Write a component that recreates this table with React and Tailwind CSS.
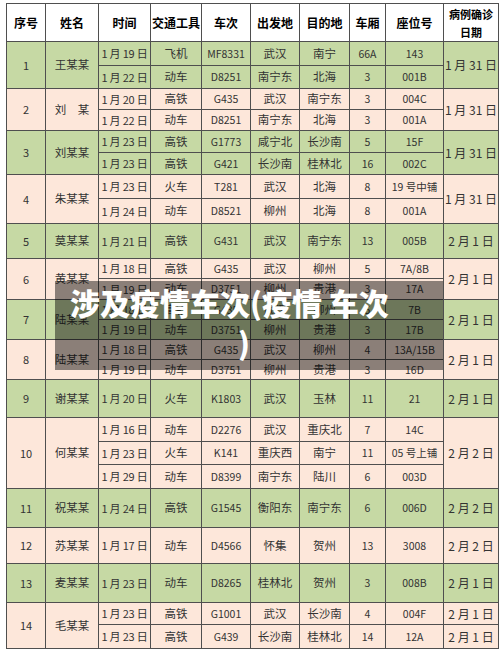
import React from "react";

const groups = [
  { no: "1", name: "王某某", c: "g", date: "1 月 31 日", rows: [
    ["h-[24px]", "1 月 19 日", "飞机", "MF8331", "武汉", "南宁", "66A", "143"],
    ["h-[23px]", "1 月 22 日", "动车", "D8251", "南宁东", "北海", "3", "001B"],
  ]},
  { no: "2", name: "刘\u3000某", c: "p", date: "1 月 31 日", rows: [
    ["h-[21px]", "1 月 20 日", "高铁", "G435", "武汉", "南宁东", "3", "004C"],
    ["h-[21px]", "1 月 22 日", "动车", "D8251", "南宁东", "北海", "3", "001A"],
  ]},
  { no: "3", name: "刘某某", c: "g", date: "1 月 31 日", rows: [
    ["h-[22px]", "1 月 23 日", "高铁", "G1773", "咸宁北", "长沙南", "5", "15F"],
    ["h-[22px]", "1 月 23 日", "高铁", "G421", "长沙南", "桂林北", "16", "002C"],
  ]},
  { no: "4", name: "朱某某", c: "p", date: "1 月 31 日", rows: [
    ["h-[24px]", "1 月 23 日", "火车", "T281", "武汉", "北海", "8", "19 号中铺"],
    ["h-[25px]", "1 月 24 日", "动车", "D8521", "柳州", "北海", "8", "001A"],
  ]},
  { no: "5", name: "莫某某", c: "g", date: "2 月 1 日", rows: [
    ["h-[35px]", "1 月 21 日", "高铁", "G431", "武汉", "南宁东", "13", "005B"],
  ]},
  { no: "6", name: "黄某某", c: "p", date: "2 月 1 日", rows: [
    ["h-[20px]", "1 月 18 日", "高铁", "G435", "武汉", "柳州", "5", "7A/8B"],
    ["h-[21px]", "1 月 19 日", "动车", "D3751", "柳州", "贵港", "3", "17A"],
  ]},
  { no: "7", name: "陆某某", c: "g", date: "2 月 1 日", rows: [
    ["h-[20px]", "1 月 18 日", "高铁", "G435", "武汉", "柳州", "5", "7B"],
    ["h-[20px]", "1 月 19 日", "动车", "D3751", "柳州", "贵港", "3", "17B"],
  ]},
  { no: "8", name: "陆某某", c: "p", date: "2 月 1 日", rows: [
    ["h-[20px]", "1 月 18 日", "高铁", "G435", "武汉", "柳州", "4", "13A/15B"],
    ["h-[20px]", "1 月 19 日", "动车", "D3751", "柳州", "贵港", "3", "16D"],
  ]},
  { no: "9", name: "谢某某", c: "g", date: "2 月 1 日", rows: [
    ["h-[38px]", "1 月 20 日", "火车", "K1803", "武汉", "玉林", "11", "21"],
  ]},
  { no: "10", name: "何某某", c: "p", date: "2 月 2 日", rows: [
    ["h-[24px]", "1 月 16 日", "动车", "D2276", "武汉", "重庆北", "7", "14C"],
    ["h-[23px]", "1 月 23 日", "火车", "K141", "重庆西", "南宁", "11", "05 号上铺"],
    ["h-[24px]", "1 月 29 日", "动车", "D8399", "南宁东", "陆川", "6", "003D"],
  ]},
  { no: "11", name: "祝某某", c: "g", date: "2 月 2 日", rows: [
    ["h-[39px]", "1 月 24 日", "高铁", "G1545", "衡阳东", "南宁东", "6", "006D"],
  ]},
  { no: "12", name: "苏某某", c: "p", date: "2 月 2 日", rows: [
    ["h-[36px]", "1 月 17 日", "动车", "D4566", "怀集", "贺州", "13", "3008"],
  ]},
  { no: "13", name: "麦某某", c: "g", date: "2 月 1 日", rows: [
    ["h-[39px]", "1 月 23 日", "动车", "D8265", "桂林北", "贺州", "3", "008B"],
  ]},
  { no: "14", name: "毛某某", c: "p", dates: ["2 月 1 日", "2 月 1 日"], rows: [
    ["h-[22px]", "1 月 23 日", "高铁", "G1001", "武汉", "长沙南", "4", "004F"],
    ["h-[24px]", "1 月 23 日", "高铁", "G439", "长沙南", "桂林北", "14", "12A"],
  ]},
];

const cell = "border border-[#4f4f4f] p-0 text-center align-middle whitespace-nowrap";

export default function App() {
  return (
    <div className="w-[500px] h-[651px] bg-[#f3f3f3] font-['Noto_Sans_CJK_SC',sans-serif] text-[#333]">
      <div className="relative bg-white pt-[3px] pl-[6px] pr-[2px] pb-[3px]">
        <table className="table-fixed border-collapse w-[492px]">
          <colgroup>
            <col className="w-[39px]" />
            <col className="w-[53px]" />
            <col className="w-[52px]" />
            <col className="w-[51px]" />
            <col className="w-[49px]" />
            <col className="w-[49px]" />
            <col className="w-[50px]" />
            <col className="w-[36px]" />
            <col className="w-[58px]" />
            <col className="w-[55px]" />
          </colgroup>
          <thead>
            <tr className="h-[38px] bg-white text-black font-bold text-[12px]">
              <th className={cell}>序号</th>
              <th className={cell}>姓名</th>
              <th className={cell}>时间</th>
              <th className={cell}>交通工具</th>
              <th className={cell}>车次</th>
              <th className={cell}>出发地</th>
              <th className={cell}>目的地</th>
              <th className={cell}>车厢</th>
              <th className={cell}>座位号</th>
              <th className="border border-[#4f4f4f] p-0 text-center align-middle text-[11px] leading-[18px]">病例确诊<br />日期</th>
            </tr>
          </thead>
          <tbody>
            {groups.map((g) => {
              const bg = g.c === "g" ? "bg-[#c6d9a4]" : "bg-[#fde7da]";
              const n = g.rows.length;
              return g.rows.map((r, i) => (
                <tr key={g.no + "-" + i} className={r[0] + " " + bg}>
                  {i === 0 && (
                    <td rowSpan={n} className={cell + " text-[11px]"}>{g.no}</td>
                  )}
                  {i === 0 && (
                    <td rowSpan={n} className={cell + " text-[11.5px]"}>{g.name}</td>
                  )}
                  <td className={cell + " text-[11px] tracking-[-0.2px]"}>{r[1]}</td>
                  <td className={cell + " text-[11.5px]"}>{r[2]}</td>
                  <td className={cell + " text-[10.5px]"}>{r[3]}</td>
                  <td className={cell + " text-[11.5px]"}>{r[4]}</td>
                  <td className={cell + " text-[11.5px]"}>{r[5]}</td>
                  <td className={cell + " text-[10.5px]"}>{r[6]}</td>
                  <td className={cell + " text-[10.5px]"}>{r[7]}</td>
                  {g.dates ? (
                    <td className={cell + " text-[12px]"}>{g.dates[i]}</td>
                  ) : (
                    i === 0 && (
                      <td rowSpan={n} className={cell + " text-[12px]"}>{g.date}</td>
                    )
                  )}
                </tr>
              ));
            })}
          </tbody>
        </table>
        <div className="absolute left-[55px] top-[281px] w-[388px] h-[89px] bg-black/45 pt-[1px] text-white font-black text-[30px] leading-[40px]">
          <div className="pl-[15px] whitespace-nowrap">涉及疫情车次(疫情 车次</div>
          <div className="pl-[183px]">)</div>
        </div>
      </div>
    </div>
  );
}
